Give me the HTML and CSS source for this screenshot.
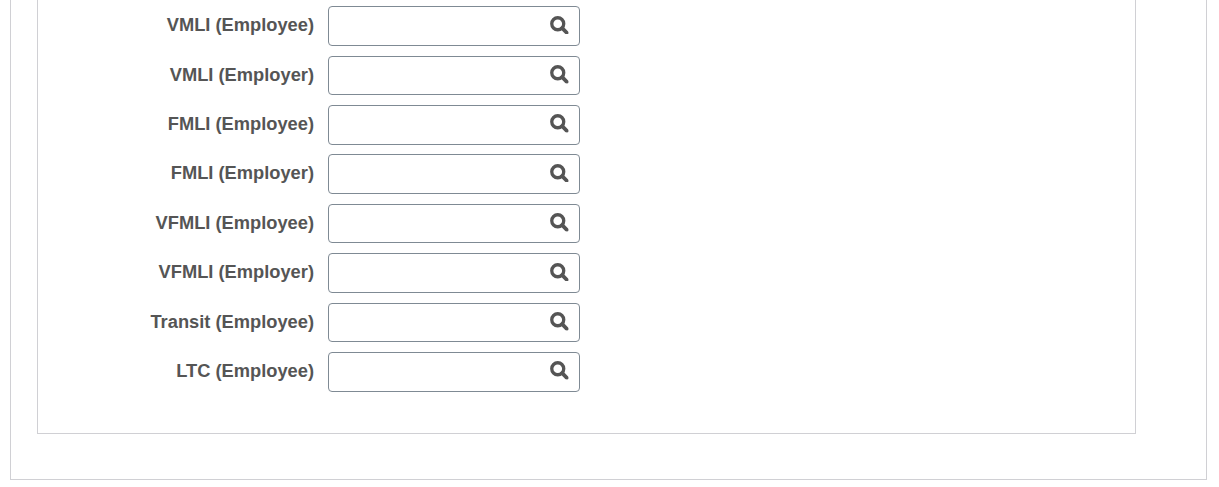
FILE: index.html
```html
<!DOCTYPE html>
<html>
  <head>
    <title>Deductions</title>
    <meta charset="UTF-8" />
    <link rel="stylesheet" href="styles.css">
  </head>
  <body>
    <svg class="defs" width="0" height="0">
      <symbol id="search" viewBox="0 0 18 18">
        <circle cx="7.5" cy="7.5" r="5.8" fill="none" stroke="currentColor" stroke-width="3.2" />
        <path d="M11.8 11.8 L16.3 16.3" fill="none" stroke="currentColor" stroke-width="3.6" stroke-linecap="round" />
      </symbol>
    </svg>

    <div class="outer">
      <div class="inner">
        <div class="row">
          <label class="label">VMLI (Employee)</label>
          <div class="field"><svg class="icon"><use href="#search" /></svg></div>
        </div>
        <div class="row">
          <label class="label">VMLI (Employer)</label>
          <div class="field"><svg class="icon"><use href="#search" /></svg></div>
        </div>
        <div class="row">
          <label class="label">FMLI (Employee)</label>
          <div class="field"><svg class="icon"><use href="#search" /></svg></div>
        </div>
        <div class="row">
          <label class="label">FMLI (Employer)</label>
          <div class="field"><svg class="icon"><use href="#search" /></svg></div>
        </div>
        <div class="row">
          <label class="label">VFMLI (Employee)</label>
          <div class="field"><svg class="icon"><use href="#search" /></svg></div>
        </div>
        <div class="row">
          <label class="label">VFMLI (Employer)</label>
          <div class="field"><svg class="icon"><use href="#search" /></svg></div>
        </div>
        <div class="row">
          <label class="label">Transit (Employee)</label>
          <div class="field"><svg class="icon"><use href="#search" /></svg></div>
        </div>
        <div class="row">
          <label class="label">LTC (Employee)</label>
          <div class="field"><svg class="icon"><use href="#search" /></svg></div>
        </div>
      </div>
    </div>
  </body>
</html>
```

FILE: styles.css
```css
html, body {
  margin: 0;
  padding: 0;
  background-color: #fff;
  overflow: hidden;
}
body {
  font-family: "Liberation Sans", Arial, sans-serif;
  height: 487px;
}
.defs {
  position: absolute;
}
.outer {
  margin: 0 12px 0 10px;
  height: 479px;
  padding: 0 26px;
  border: 1px solid #d0d0d4;
  border-top: none;
}
.inner {
  height: 434px;
  box-sizing: border-box;
  padding-top: 6.2px;
  border: 1px solid #d0d0d4;
  border-top: none;
  width: 1099px;
}
.row {
  display: flex;
  align-items: flex-start;
  margin-bottom: 9.92px;
  height: 39.5px;
}
.label {
  width: 290px;
  padding-right: 14px;
  box-sizing: border-box;
  text-align: right;
  font-size: 18.3px;
  font-weight: bold;
  line-height: 38.8px;
  color: #555;
}
.field {
  width: 252px;
  height: 39.5px;
  box-sizing: border-box;
  border: 1px solid #7f8a94;
  border-radius: 4px;
  display: flex;
  align-items: center;
  justify-content: flex-end;
  padding-right: 10px;
  padding-bottom: 2px;
  color: #555;
}
.icon {
  width: 18.6px;
  height: 18.6px;
}
```
